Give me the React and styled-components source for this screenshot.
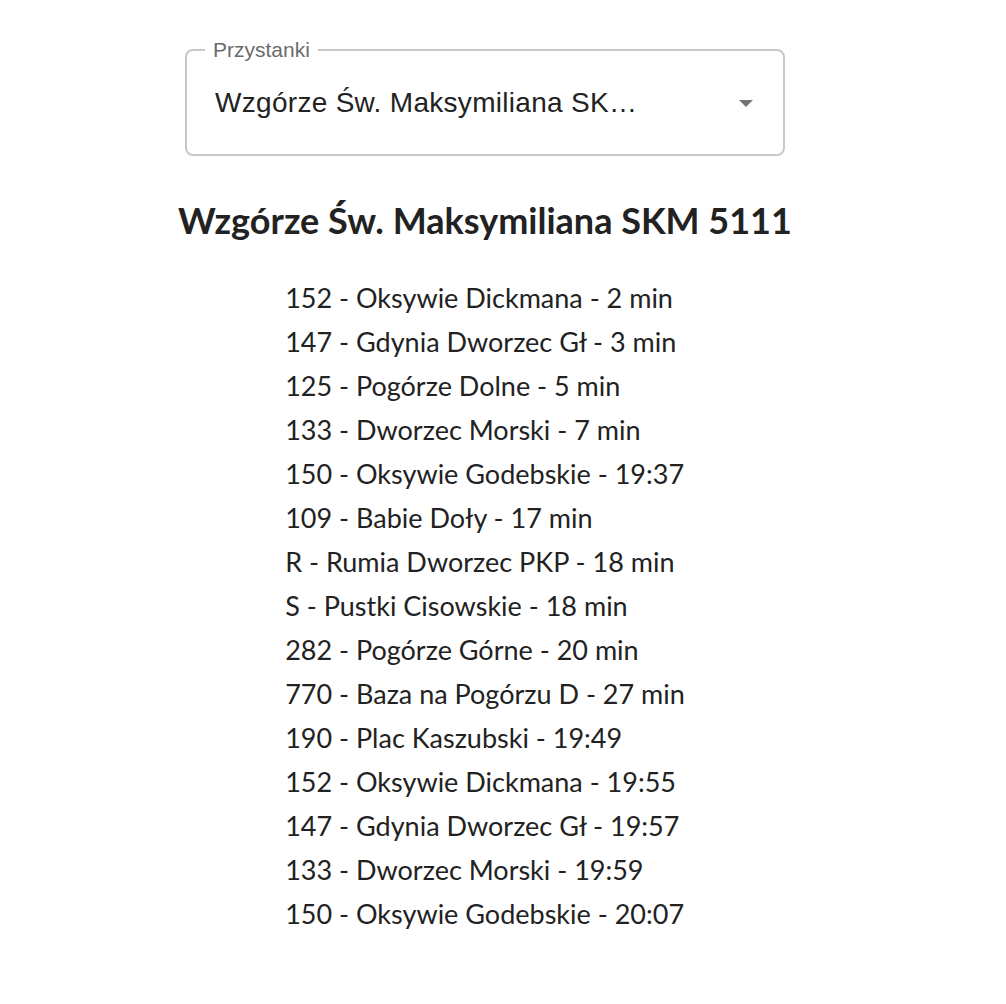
import React from "react";
import styled, { createGlobalStyle } from "styled-components";

const departures = [
  "152 - Oksywie Dickmana - 2 min",
  "147 - Gdynia Dworzec Gł - 3 min",
  "125 - Pogórze Dolne - 5 min",
  "133 - Dworzec Morski - 7 min",
  "150 - Oksywie Godebskie - 19:37",
  "109 - Babie Doły - 17 min",
  "R - Rumia Dworzec PKP - 18 min",
  "S - Pustki Cisowskie - 18 min",
  "282 - Pogórze Górne - 20 min",
  "770 - Baza na Pogórzu D - 27 min",
  "190 - Plac Kaszubski - 19:49",
  "152 - Oksywie Dickmana - 19:55",
  "147 - Gdynia Dworzec Gł - 19:57",
  "133 - Dworzec Morski - 19:59",
  "150 - Oksywie Godebskie - 20:07",
];

const GlobalStyle = createGlobalStyle`
  body {
    margin: 0;
    background: #fff;
    font-family: Lato, "Noto Sans", sans-serif;
  }
`;

const App = () => {
  const stop = "Wzgórze Św. Maksymiliana SKM 5111";
  return (
    <>
      <GlobalStyle />
      <Page>
        <Select>
          <Legend>Przystanki</Legend>
          <SelectRow>
            <Value>{stop}</Value>
            <Arrow viewBox="0 0 14 7">
              <path d="M0 0 L14 0 L7 7 Z" fill="#757575" />
            </Arrow>
          </SelectRow>
        </Select>
        <Title>{stop}</Title>
        <List>
          {departures.map((d, i) => (
            <Item key={i}>{d}</Item>
          ))}
        </List>
      </Page>
    </>
  );
};

const Page = styled.main`
  width: 970px;
  display: flex;
  flex-direction: column;
  align-items: center;
  padding-top: 38px;
`;

const Select = styled.fieldset`
  box-sizing: border-box;
  width: 600px;
  height: 118px;
  margin: 0;
  padding: 0;
  border: 2px solid #c8c8c8;
  border-radius: 8px;
  font-family: "Liberation Sans", Arial, sans-serif;
`;

const Legend = styled.legend`
  margin-left: 18px;
  padding: 0 8px;
  font-size: 21px;
  line-height: 24px;
  color: #6b6b6b;
`;

const SelectRow = styled.div`
  display: flex;
  align-items: center;
  height: 82px;
  padding: 0 30px 0 28px;
`;

const Value = styled.div`
  width: 432px;
  font-size: 28px;
  letter-spacing: 0.3px;
  color: #222;
  white-space: nowrap;
  overflow: hidden;
  text-overflow: ellipsis;
`;

const Arrow = styled.svg`
  width: 14px;
  height: 7px;
  margin-left: auto;
`;

const Title = styled.h1`
  margin: 44px 0 0;
  font-size: 36px;
  line-height: 40px;
  font-weight: 700;
  color: #222;
`;

const List = styled.ul`
  list-style: none;
  margin: 36px 0 0;
  padding: 0;
`;

const Item = styled.li`
  font-size: 27px;
  line-height: 44px;
  color: #222;
`;

export default App;
